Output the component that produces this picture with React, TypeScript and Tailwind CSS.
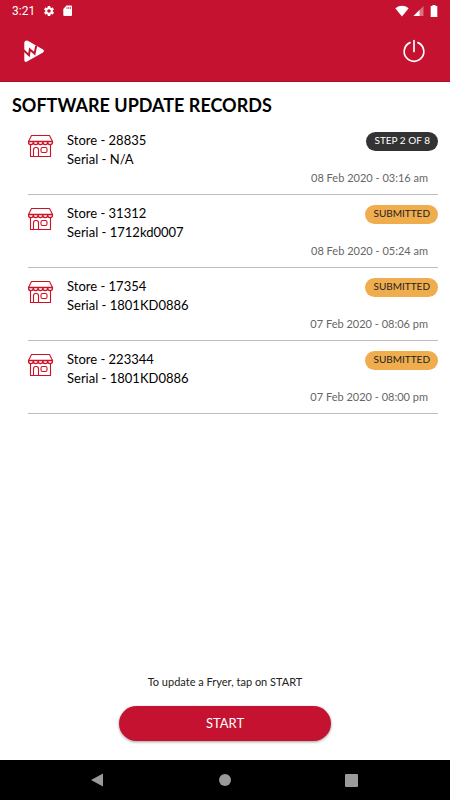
interface UpdateRecord {
  id: number;
  store: string;
  serial: string;
  status: string;
  submitted: boolean;
  date: string;
}

const RECORDS: UpdateRecord[] = [
  { id: 1, store: "28835", serial: "N/A", status: "STEP 2 OF 8", submitted: false, date: "08 Feb 2020 - 03:16 am" },
  { id: 2, store: "31312", serial: "1712kd0007", status: "SUBMITTED", submitted: true, date: "08 Feb 2020 - 05:24 am" },
  { id: 3, store: "17354", serial: "1801KD0886", status: "SUBMITTED", submitted: true, date: "07 Feb 2020 - 08:06 pm" },
  { id: 4, store: "223344", serial: "1801KD0886", status: "SUBMITTED", submitted: true, date: "07 Feb 2020 - 08:00 pm" },
];

function StoreIcon() {
  return (
    <svg viewBox="0 0 26 24" className="h-6 w-[26px] shrink-0" fill="none" stroke="#cf1126" strokeWidth="1.1" strokeLinejoin="round" aria-hidden="true">
      <path d="M3.5 1.5h18l3 6H.5z" />
      <path d="M.5 7.500v.7a2.4 2.4 0 0 0 4.8 0 2.4 2.4 0 0 0 4.8 0 2.4 2.4 0 0 0 4.8 0 2.4 2.4 0 0 0 4.8 0 2.4 2.4 0 0 0 4.8 0V7.500z" strokeWidth="1.3" />
      <path d="M2.5 10.5v12h20v-12" />
      <path d="M5.5 22.5v-6.500q0-2.500 2-2.500h1q2 0 2 2.500v6.500" />
      <rect x="13" y="13.5" width="6" height="5" rx="1.5" />
    </svg>
  );
}

function LogoIcon() {
  return (
    <svg viewBox="0 0 22 24" className="h-6 w-[22px]" aria-hidden="true">
      <path d="M2.3 2Q3.3 1 4.8 1.8L20 10.6Q22 12 20 13.4L4 22.6Q1.5 23.6 1.3 21V4Q1.3 2.5 2.3 2z" fill="#fff" />
      <path d="M.3 11L6 16.3L6.8 10.4L11.6 14.6L13.2 6.8" fill="none" stroke="#c41230" strokeWidth="2" strokeLinejoin="miter" />
    </svg>
  );
}

function StatusBar() {
  return (
    <div className="flex h-[21px] items-center justify-between px-3 font-['Roboto',sans-serif] text-xs">
      <div className="flex items-center gap-2">
        <span>3:21</span>
        <svg viewBox="0 0 24 24" className="size-3" fill="currentColor" aria-hidden="true">
          <path d="M19.4 13a7.5 7.5 0 0 0 0-2l2.1-1.7a.5.5 0 0 0 .1-.6l-2-3.5a.5.5 0 0 0-.6-.2l-2.5 1a7 7 0 0 0-1.7-1L14.5 2.4A.5.5 0 0 0 14 2h-4a.5.5 0 0 0-.5.4L9.1 5a7 7 0 0 0-1.7 1l-2.4-1a.5.5 0 0 0-.6.2l-2 3.5a.5.5 0 0 0 .1.6L4.6 11a7.5 7.5 0 0 0 0 2l-2.1 1.7a.5.5 0 0 0-.1.6l2 3.5c.1.2.4.3.6.2l2.5-1a7 7 0 0 0 1.7 1l.4 2.6c0 .2.2.4.5.4h4c.2 0 .5-.2.5-.4l.4-2.6a7 7 0 0 0 1.7-1l2.4 1c.2.1.5 0 .6-.2l2-3.5a.5.5 0 0 0-.1-.6zM12 15.6a3.6 3.6 0 1 1 0-7.2 3.6 3.6 0 0 1 0 7.2z" />
        </svg>
        <svg viewBox="0 0 10 12" className="h-3 w-2.5" aria-hidden="true">
          <path d="M3.5 .5H8a1 1 0 0 1 1 1v8.5a1 1 0 0 1-1 1H1.3a1 1 0 0 1-1-1V4z" fill="currentColor" />
          <path d="M4 2v2M5.7 2v2M7.4 2v2" stroke="#c41230" strokeWidth=".7" />
        </svg>
      </div>
      <div className="flex items-center gap-1">
        <svg viewBox="0 0 14 12" className="h-3 w-3.5" fill="currentColor" aria-hidden="true">
          <path d="M7 11.5L.3 3.2Q7-1.6 13.7 3.2z" />
        </svg>
        <svg viewBox="0 0 11 12" className="h-3 w-[11px]" fill="currentColor" aria-hidden="true">
          <path d="M.5 11L10.5 1v10z" opacity=".4" />
          <path d="M.5 11L6.5 5v6z" />
        </svg>
        <svg viewBox="0 0 8 12" className="ml-0.5 h-3 w-2" fill="currentColor" aria-hidden="true">
          <path d="M2.5 0h3v1H7.3v11H.7V1h1.8z" />
        </svg>
      </div>
    </div>
  );
}

function RecordRow({ record }: { record: UpdateRecord }) {
  return (
    <li className="flex h-[73px] border-b border-[#bdbdbd] pt-2">
      <div className="pt-1">
        <StoreIcon />
      </div>
      <div className="ml-[13px] flex-1 pt-px text-[13px] leading-[19px] text-black">
        <p>Store - {record.store}</p>
        <p>Serial - {record.serial}</p>
      </div>
      <div className="flex flex-col items-end pt-0.5">
        <span
          className={
            record.submitted
              ? "h-[19px] rounded-full bg-[#f0ad4e] px-2 text-[10px] leading-[17px] text-[#222]"
              : "h-[19px] rounded-full bg-[#333] px-2 text-[10px] leading-[17px] text-white"
          }
        >
          {record.status}
        </span>
        <time className="mt-[19px] pr-2.5 text-[11px] leading-4 text-[#666]">{record.date}</time>
      </div>
    </li>
  );
}

export default function App() {
  return (
    <div className="flex min-h-screen flex-col bg-white font-['Lato',sans-serif]">
      <header className="border-b border-[#a80f29] bg-[#c41230] text-white">
        <StatusBar />
        <div className="flex h-[60px] items-center justify-between pr-6 pl-[23px]">
          <LogoIcon />
          <button type="button" aria-label="Log out">
            <svg viewBox="0 0 24 24" className="size-6" fill="none" stroke="currentColor" strokeWidth="1.7" strokeLinecap="round" aria-hidden="true">
              <path d="M12 1.5v11M8 3.6a9.8 9.8 0 1 0 8 0" />
            </svg>
          </button>
        </div>
      </header>

      <main className="flex flex-1 flex-col">
        <h1 className="px-3 pt-[11px] text-lg leading-6 font-bold text-black">SOFTWARE UPDATE RECORDS</h1>
        <ul className="mt-[5px] pr-3 pl-7">
          {RECORDS.map((record) => (
            <RecordRow key={record.id} record={record} />
          ))}
        </ul>

        <div className="mt-auto flex flex-col items-center pb-[19px]">
          <p className="text-[11px] leading-4 text-[#222]">To update a Fryer, tap on START</p>
          <button
            type="button"
            className="mt-4 h-[35px] w-[47%] rounded-full bg-[#c41230] text-[13px] text-white shadow-[0_1px_3px_rgba(0,0,0,0.4)]"
          >
            START
          </button>
        </div>
      </main>

      <nav className="grid h-10 grid-cols-3 items-center justify-items-center bg-black px-[35px] text-[#9a9a9a]">
        <button type="button" aria-label="Back">
          <svg viewBox="0 0 14 14" className="size-3.5" fill="currentColor" aria-hidden="true">
            <path d="M12 .5v13L0 7z" />
          </svg>
        </button>
        <button type="button" aria-label="Home" className="size-3 rounded-full bg-[#9a9a9a]" />
        <button type="button" aria-label="Recent apps" className="size-[13px] rounded-[1px] bg-[#9a9a9a]" />
      </nav>
    </div>
  );
}
